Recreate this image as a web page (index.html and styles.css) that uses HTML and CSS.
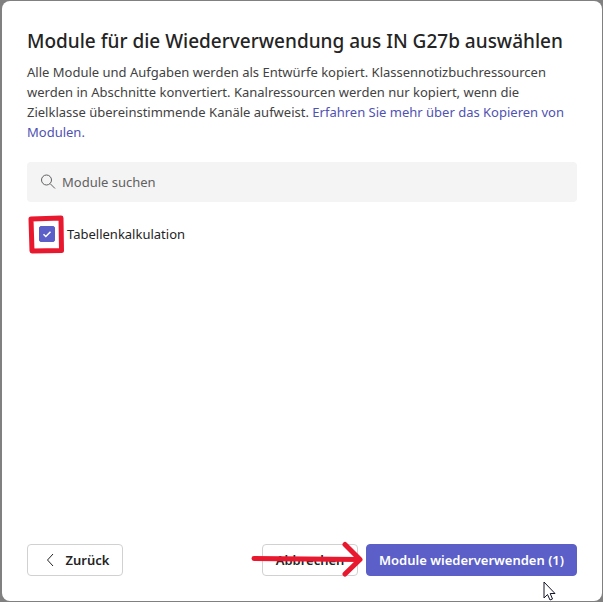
FILE: index.html
```html
<!DOCTYPE html>
<html lang="de">
<head>
<meta charset="utf-8">
<meta name="viewport" content="width=device-width, initial-scale=1">
<title>Module wiederverwenden</title>
<link rel="stylesheet" href="styles.css">
</head>
<body>
<main class="dialog" role="dialog" aria-labelledby="dialog-title">
  <h1 class="title" id="dialog-title">Module für die Wiederverwendung aus IN G27b auswählen</h1>
  <p class="intro">Alle Module und Aufgaben werden als Entwürfe kopiert. Klassennotizbuchressourcen werden in Abschnitte konvertiert. Kanalressourcen werden nur kopiert, wenn die Zielklasse übereinstimmende Kanäle aufweist. <a class="link" href="#">Erfahren Sie mehr über das Kopieren von Modulen.</a></p>
  <div class="search">
    <svg class="search-icon" viewBox="0 0 16 16" aria-hidden="true"><circle cx="6.5" cy="6" r="5"/><path d="M10.2 9.7 15 14.5"/></svg>
    <input class="search-input" type="search" placeholder="Module suchen" aria-label="Module suchen">
  </div>
  <div class="module">
    <span class="check-holder">
      <input class="check" type="checkbox" id="module-1" checked>
      <svg class="tick" viewBox="0 0 16 16" aria-hidden="true"><path d="M4.500 8.300 6.800 10.500 11.500 5.700"/></svg>
      <svg class="highlight" viewBox="0 0 38 40" aria-hidden="true"><path d="M4 5 34 4 34.500 36.500 5 37Z"/></svg>
    </span>
    <label class="module-name" for="module-1">Tabellenkalkulation</label>
  </div>
  <footer class="actions">
    <button class="button back" type="button"><svg class="chevron" viewBox="0 0 8 14" aria-hidden="true"><path d="M7 1 1.500 7 7 13"/></svg>Zurück</button>
    <button class="button cancel" type="button">Abbrechen
      <svg class="arrow" viewBox="0 0 114 36" aria-hidden="true"><path d="M4 17.500 109 18.500M95 3.500 110 18.500 95 33"/></svg>
    </button>
    <button class="button primary" type="button">Module wiederverwenden (1)
      <svg class="cursor" viewBox="0 0 13 20" aria-hidden="true"><path d="M1 1V17L4.500 13.500 7 19 9.500 18 7.200 12.500H12Z"/></svg>
    </button>
  </footer>
</main>
</body>
</html>
```
FILE: styles.css
```css
* {
  box-sizing: border-box;
}

body {
  display: flex;
  min-height: 100vh;
  margin: 0;
  padding: 1px 1px 1px 2px;
  background: #808080;
  color: #242424;
  font: 14px/20px "Noto Sans", "Open Sans", sans-serif;
}

.dialog {
  display: flex;
  flex: 1;
  flex-direction: column;
  padding: 24px 25px 25px;
  border-radius: 8px;
  background: #fff;
}

.title {
  margin: 0;
  font-size: 19px;
  font-weight: 500;
  line-height: 32px;
}

.intro {
  margin: 5px 0 20px;
  color: #424242;
  font-size: 13px;
}

.link {
  color: #4f52b2;
  text-decoration: none;
}

.search {
  display: flex;
  align-items: center;
  gap: 6px;
  height: 40px;
  padding: 0 13px;
  border-radius: 4px;
  background: #f4f4f4;
}

.search-icon {
  width: 16px;
  height: 16px;
  fill: none;
  stroke: #616161;
}

.search-input {
  flex: 1;
  min-width: 0;
  padding: 0;
  border: 0;
  outline: 0;
  background: transparent;
  color: #242424;
  font: inherit;
  font-size: 13px;
}

.search-input::placeholder {
  color: #616161;
  opacity: 1;
}

.module {
  display: flex;
  align-items: center;
  gap: 12px;
  margin-top: 22px;
  padding-left: 12px;
  font-size: 13px;
}

.check-holder {
  position: relative;
  display: flex;
}

.check {
  width: 16px;
  height: 16px;
  margin: 0;
  border: 1px solid #5b5fc7;
  border-radius: 2px;
  background: #fff;
  appearance: none;
}

.check:checked {
  background: #5b5fc7;
}

.tick {
  position: absolute;
  inset: 0;
  width: 16px;
  height: 16px;
  fill: none;
  stroke: #fff;
  stroke-width: 1.5;
  pointer-events: none;
}

.highlight {
  position: absolute;
  top: -12px;
  left: -12px;
  width: 38px;
  height: 40px;
  fill: none;
  stroke: #e8192f;
  stroke-width: 5;
  stroke-linejoin: round;
  pointer-events: none;
}

.actions {
  display: flex;
  gap: 8px;
  margin-top: auto;
}

.button {
  position: relative;
  display: flex;
  align-items: center;
  justify-content: center;
  height: 32px;
  padding: 0 12px;
  border: 1px solid #d1d1d1;
  border-radius: 4px;
  background: #fff;
  color: #242424;
  font: 600 13px/20px "Noto Sans", "Open Sans", sans-serif;
  white-space: nowrap;
}

.back {
  gap: 12px;
  min-width: 96px;
  margin-right: auto;
  padding-left: 17px;
}

.cancel {
  min-width: 96px;
}

.primary {
  border-color: #5b5fc7;
  background: #5b5fc7;
  color: #fff;
}

.chevron {
  width: 8px;
  height: 14px;
  fill: none;
  stroke: #242424;
}

.arrow {
  position: absolute;
  z-index: 1;
  top: -4px;
  right: -7px;
  width: 114px;
  height: 36px;
  fill: none;
  stroke: #e8192f;
  stroke-width: 5;
  stroke-linecap: round;
  stroke-linejoin: round;
  pointer-events: none;
}

.cursor {
  position: absolute;
  right: 20px;
  bottom: -26px;
  width: 13px;
  height: 20px;
  fill: #fff;
  stroke: #14142a;
}
```
